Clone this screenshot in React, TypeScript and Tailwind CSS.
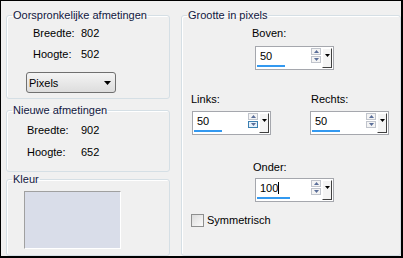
import React from 'react';

type SpinProps = {
  value: string;
  bar: number;
  caret?: boolean;
  hoverDown?: boolean;
};

const Arrow: React.FC<{ up?: boolean; color: string }> = ({ up, color }) => (
  <svg width="5" height="3" viewBox="0 0 5 3" className="block">
    <polygon points={up ? '2.5,0 5,3 0,3' : '0,0 5,0 2.5,3'} fill={color} />
  </svg>
);

const SpinBox: React.FC<SpinProps> = ({ value, bar, caret, hoverDown }) => (
  <div className="flex w-[79px] h-[24px] border border-[#a5a7ad] bg-white">
    <div className="flex flex-col flex-1 pt-[2px]">
      <div className="flex items-center pl-[4px] h-[14px] text-black">
        <span>{value}</span>
        {caret && <span className="w-px h-[12px] bg-black" />}
      </div>
      <div className="ml-[1px] mt-[2px] h-[2px] bg-[#3399f0]" style={{ width: bar }} />
    </div>
    <div className="flex flex-col gap-[1px] pt-[1px] mr-[1px]">
      <div className="flex items-center justify-center w-[10px] h-[7px] border border-[#c0c4cc] bg-[#f4f4f4]">
        <Arrow up color="#5a6e99" />
      </div>
      <div
        className={
          hoverDown
            ? 'flex items-center justify-center w-[10px] h-[7px] border border-[#3c7fb1] bg-[#e5f1fb]'
            : 'flex items-center justify-center w-[10px] h-[7px] border border-[#c0c4cc] bg-[#f4f4f4]'
        }
      >
        <Arrow color="#5a6e99" />
      </div>
    </div>
    <div className="flex justify-center pt-[5px] mt-[1px] mr-[1px] w-[10px] h-[20px] bg-[#f4f4f4] border-t border-l border-white border-r border-b border-r-[#404040] border-b-[#404040]">
      <Arrow color="#000" />
    </div>
  </div>
);

const App: React.FC = () => {
  return (
    <div className="w-[403px] h-[258px] bg-[#f0f0f0] border-l border-t border-r-2 border-b-2 border-black flex font-['Liberation_Sans',Arial,sans-serif] text-[11px] leading-[14px] text-black">
      <div className="flex flex-col ml-[5px] w-[164px]">
        <fieldset className="mt-[7px] h-[91px] border border-[#d5dfe5] rounded-[3px] pl-[5px] shadow-[inset_1px_1px_0_#fff]">
          <legend className="px-[1px] text-[#10173f]">Oorspronkelijke afmetingen</legend>
          <div className="flex mt-[4px] ml-[21px]">
            <span className="w-[48px]">Breedte:</span>
            <span>802</span>
          </div>
          <div className="flex mt-[7px] ml-[21px]">
            <span className="w-[48px]">Hoogte:</span>
            <span>502</span>
          </div>
          <div className="flex items-center justify-between mt-[11px] ml-[14px] w-[90px] h-[21px] border border-[#707070] rounded-[3px] bg-gradient-to-b from-[#f4f4f4] to-[#dddddd] pl-[2px] pr-[4px]">
            <span>Pixels</span>
            <svg width="7" height="4" viewBox="0 0 7 4">
              <polygon points="0,0 7,0 3.5,4" fill="#000" />
            </svg>
          </div>
        </fieldset>
        <fieldset className="mt-[4px] h-[69px] border border-[#d5dfe5] rounded-[3px] pl-[5px] shadow-[inset_1px_1px_0_#fff]">
          <legend className="px-[1px] text-[#10173f]">Nieuwe afmetingen</legend>
          <div className="flex mt-[6px] ml-[15px]">
            <span className="w-[54px]">Breedte:</span>
            <span>902</span>
          </div>
          <div className="flex mt-[8px] ml-[15px]">
            <span className="w-[54px]">Hoogte:</span>
            <span>652</span>
          </div>
        </fieldset>
        <fieldset className="h-[84px] border border-[#d5dfe5] rounded-[3px] pl-[5px] shadow-[inset_1px_1px_0_#fff]">
          <legend className="px-[1px] text-[#10173f]">Kleur</legend>
          <div className="mt-[5px] ml-[12px] w-[97px] h-[58px] bg-[#d9dde9] border-t border-l border-[#a0a0a0] border-r border-b border-r-white border-b-white" />
        </fieldset>
      </div>
      <fieldset className="ml-[11px] mt-[7px] w-[220px] h-[248px] border border-[#d5dfe5] rounded-[3px] pl-[5px] shadow-[inset_1px_1px_0_#fff]">
        <legend className="px-[1px] text-[#10173f]">Grootte in pixels</legend>
        <div className="flex flex-col">
          <div className="mt-[4px] ml-[65px]">Boven:</div>
          <div className="mt-[6px] ml-[68px]">
            <SpinBox value="50" bar={28} />
          </div>
          <div className="flex mt-[22px]">
            <div className="flex flex-col ml-[4px] w-[119px]">
              <span>Links:</span>
              <div className="mt-[5px] ml-[1px]">
                <SpinBox value="50" bar={28} hoverDown />
              </div>
            </div>
            <div className="flex flex-col">
              <span className="ml-[1px]">Rechts:</span>
              <div className="mt-[5px]">
                <SpinBox value="50" bar={28} />
              </div>
            </div>
          </div>
          <div className="mt-[25px] ml-[66px]">Onder:</div>
          <div className="mt-[4px] ml-[68px]">
            <SpinBox value="100" bar={33} caret />
          </div>
          <div className="flex items-center mt-[11px] ml-[4px]">
            <div className="w-[13px] h-[13px] border border-[#8e8f8f] bg-gradient-to-br from-[#dcdcdc] to-[#fbfbfb]" />
            <span className="ml-[3px]">Symmetrisch</span>
          </div>
        </div>
      </fieldset>
    </div>
  );
};

export default App;
